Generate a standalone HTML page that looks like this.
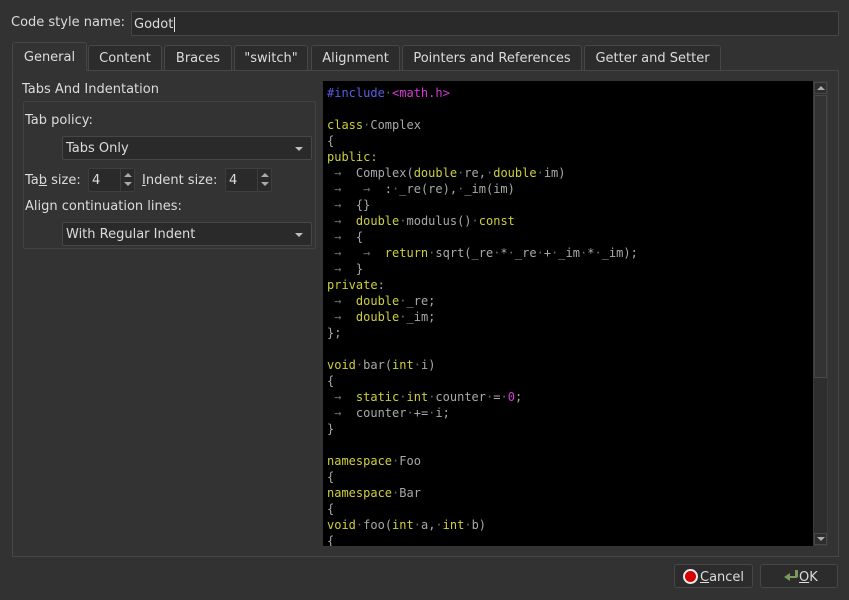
<!DOCTYPE html>
<html><head><style>
*{margin:0;padding:0;box-sizing:border-box}
body{width:849px;height:600px;background:#323232;font-family:"DejaVu Sans","Liberation Sans",sans-serif;font-size:13px;color:#dcdcdc;position:relative;overflow:hidden}
.a{position:absolute}
.tab{position:absolute;top:45px;height:25px;border:1px solid #474747;border-bottom:none;background:#2c2c2c;border-radius:3px 3px 0 0;text-align:center;line-height:25px}
.combo{position:absolute;height:24px;background:#2a2a2a;border:1px solid #474747;border-radius:2px;line-height:24px;padding-left:3px}
.combo:after{content:"";position:absolute;right:8px;top:10px;border-left:4px solid transparent;border-right:4px solid transparent;border-top:4px solid #c0c0c0}
.spin{position:absolute;height:24px;background:#2a2a2a;border:1px solid #3e3e3e;border-radius:2px;line-height:24px;padding-left:3px}
.spin i{position:absolute;right:0;top:0;width:14px;height:22px;border-left:1px solid #3e3e3e}
.spin i:before{content:"";position:absolute;left:3px;top:4px;border-left:4px solid transparent;border-right:4px solid transparent;border-bottom:4px solid #aaa}
.spin i:after{content:"";position:absolute;left:3px;top:13px;border-left:4px solid transparent;border-right:4px solid transparent;border-top:4px solid #aaa}
pre{font-family:"DejaVu Sans Mono","Liberation Mono",monospace;font-size:12px;line-height:16px;color:#a8a8a8}
.k{color:#cfcf3a}.w{color:#6a6a6a}.p{color:#5c5ce8}.m{color:#d43cd4}
.btn{position:absolute;top:564px;height:24px;border:1px solid #474747;border-radius:3px;background:#2c2c2c;line-height:24px}
</style></head><body>
<div class="a" style="left:11px;top:15px">Code style name:</div>
<div class="a" style="left:131px;top:11px;width:708px;height:25px;background:#2a2a2a;border:1px solid #474747;border-radius:2px;line-height:25px;padding-left:2px">Godot<span style="border-left:1px solid #ddd;margin-left:1px"></span></div>

<div class="a" style="left:12px;top:70px;width:827px;height:487px;border:1px solid #474747;background:#333"></div>
<div class="tab" style="left:12px;top:42px;width:75px;height:29px;background:#333;border-bottom:1px solid #333;line-height:29px">General</div>
<div class="tab" style="left:88px;width:74px">Content</div>
<div class="tab" style="left:164px;width:68px">Braces</div>
<div class="tab" style="left:234px;width:74px">"switch"</div>
<div class="tab" style="left:311px;width:89px">Alignment</div>
<div class="tab" style="left:402px;width:180px">Pointers and References</div>
<div class="tab" style="left:584px;width:137px">Getter and Setter</div>

<div class="a" style="left:22px;top:82px">Tabs And Indentation</div>
<div class="a" style="left:23px;top:101px;width:293px;height:148px;border:1px solid #414141;border-radius:2px"></div>
<div class="a" style="left:25px;top:113px">Tab policy:</div>
<div class="combo" style="left:62px;top:136px;width:250px">Tabs Only</div>
<div class="a" style="left:25px;top:173px">Ta<u>b</u> size:</div>
<div class="spin" style="left:88px;top:168px;width:47px">4<i></i></div>
<div class="a" style="left:142px;top:173px"><u>I</u>ndent size:</div>
<div class="spin" style="left:225px;top:168px;width:47px">4<i></i></div>
<div class="a" style="left:25px;top:199px">Align continuation lines:</div>
<div class="combo" style="left:62px;top:222px;width:250px">With Regular Indent</div>

<div class="a" style="left:323px;top:81px;width:490px;height:465px;background:#000;overflow:hidden">
<pre style="padding:4px 0 0 4px"><span class="p">#include</span><span class="w">·</span><span class="m">&lt;math.h&gt;</span>

<span class="k">class</span><span class="w">·</span>Complex
{
<span class="k">public</span>:
<span class="w"> →  </span>Complex(<span class="k">double</span><span class="w">·</span>re,<span class="w">·</span><span class="k">double</span><span class="w">·</span>im)
<span class="w"> →   →  </span>:<span class="w">·</span>_re(re),<span class="w">·</span>_im(im)
<span class="w"> →  </span>{}
<span class="w"> →  </span><span class="k">double</span><span class="w">·</span>modulus()<span class="w">·</span><span class="k">const</span>
<span class="w"> →  </span>{
<span class="w"> →   →  </span><span class="k">return</span><span class="w">·</span>sqrt(_re<span class="w">·</span>*<span class="w">·</span>_re<span class="w">·</span>+<span class="w">·</span>_im<span class="w">·</span>*<span class="w">·</span>_im);
<span class="w"> →  </span>}
<span class="k">private</span>:
<span class="w"> →  </span><span class="k">double</span><span class="w">·</span>_re;
<span class="w"> →  </span><span class="k">double</span><span class="w">·</span>_im;
};

<span class="k">void</span><span class="w">·</span>bar(<span class="k">int</span><span class="w">·</span>i)
{
<span class="w"> →  </span><span class="k">static</span><span class="w">·</span><span class="k">int</span><span class="w">·</span>counter<span class="w">·</span>=<span class="w">·</span><span class="m">0</span>;
<span class="w"> →  </span>counter<span class="w">·</span>+=<span class="w">·</span>i;
}

<span class="k">namespace</span><span class="w">·</span>Foo
{
<span class="k">namespace</span><span class="w">·</span>Bar
{
<span class="k">void</span><span class="w">·</span>foo(<span class="k">int</span><span class="w">·</span>a,<span class="w">·</span><span class="k">int</span><span class="w">·</span>b)
{</pre></div>
<div class="a" style="left:813px;top:81px;width:15px;height:465px;background:#2e2e2e;border:1px solid #3a3a3a"></div>
<div class="a" style="left:814px;top:82px;width:13px;height:12px;border:1px solid #474747"></div>
<div class="a" style="left:817px;top:86px;border-left:4px solid transparent;border-right:4px solid transparent;border-bottom:4px solid #aaa"></div>
<div class="a" style="left:814px;top:95px;width:13px;height:283px;background:#333;border:1px solid #474747"></div>
<div class="a" style="left:814px;top:533px;width:13px;height:12px;border:1px solid #474747"></div>
<div class="a" style="left:817px;top:537px;border-left:4px solid transparent;border-right:4px solid transparent;border-top:4px solid #aaa"></div>

<div class="btn" style="left:674px;width:79px"><span class="a" style="left:8px;top:4px;width:15px;height:15px;border-radius:50%;background:#d40000;border:2px solid #eee"></span><span class="a" style="left:25px;top:1px"><u>C</u>ancel</span></div>
<div class="btn" style="left:760px;width:78px"><svg class="a" style="left:22px;top:3px" width="18" height="16" viewBox="0 0 18 16"><path d="M10 2h5v6a2 2 0 0 1-2 2H7v3L1 9l6-4v3h5V2z" fill="#7a9a5a"/></svg><span class="a" style="left:38px;top:1px"><u>O</u>K</span></div>
</body></html>
